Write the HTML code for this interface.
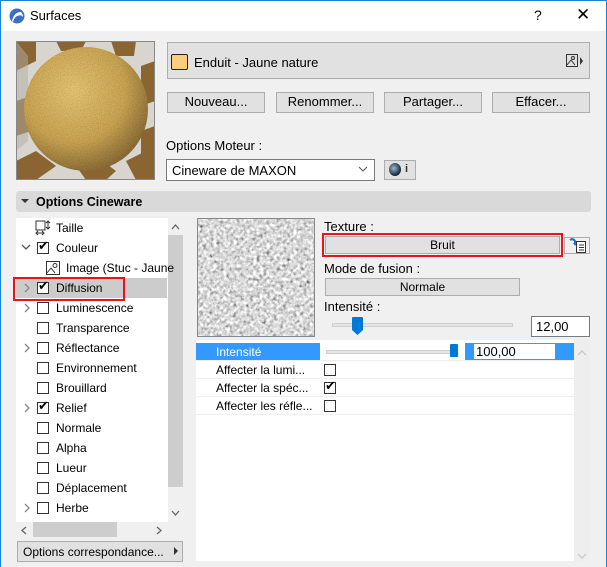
<!DOCTYPE html>
<html><head><meta charset="utf-8"><style>
*{box-sizing:border-box;margin:0;padding:0}
body{width:607px;height:567px;overflow:hidden;background:#f0f0f0;font-family:"Liberation Sans",sans-serif;font-size:12px;color:#000;position:relative}
.a{position:absolute}
.btn{position:absolute;background:#e1e1e1;border:1px solid #adadad;text-align:center;line-height:18px}
.cb{position:absolute;width:12px;height:12px;border:1px solid #333;background:#fff}
.t{position:absolute;white-space:nowrap}
</style></head><body>
<div class="a" style="left:0;top:0;width:607px;height:31px;background:#fff"></div>
<div class="a" style="left:0;top:0;width:1px;height:567px;background:#1883d7"></div>
<div class="a" style="left:606px;top:0;width:1px;height:567px;background:#1883d7"></div>
<div class="a" style="left:0;top:0;width:607px;height:1px;background:#1883d7"></div>
<svg class="a" style="left:9px;top:8px" width="16" height="16"><circle cx="8" cy="8" r="7.5" fill="#3b6fc4"/><path d="M3 13 Q5 4 12 4 Q14 6 14 9 Q12 6 8 8 Q5 10 4 14Z" fill="#fff"/></svg>
<div class="t" style="left:30px;top:8px;font-size:13px">Surfaces</div>
<div class="t" style="left:534px;top:7px;font-size:14px">?</div>
<div class="t" style="left:576px;top:5px;font-size:17px">✕</div>

<svg class="a" style="left:16px;top:41px" width="139" height="139">
<defs><filter id="g"><feTurbulence type="fractalNoise" baseFrequency="0.9" numOctaves="2" seed="3"/><feColorMatrix type="matrix" values="0 0 0 0 0  0 0 0 0 0  0 0 0 0 0  0 0 0 -0.9 0.55"/><feComposite in2="SourceGraphic" operator="in"/></filter>
<radialGradient id="sp" cx="0.4" cy="0.35" r="0.7"><stop offset="0" stop-color="#e6c573"/><stop offset="0.6" stop-color="#caa452"/><stop offset="1" stop-color="#836633"/></radialGradient></defs>
<rect width="139" height="139" fill="#d8d5cf"/>
<path d="M0 0 H20 V20 L0 30Z M40 0 H70 L65 10 H45Z M95 0 H120 L118 15 H100Z M0 60 L15 55 V90 L0 95Z M125 25 L139 20 V60 L125 65Z M125 90 L139 85 V120 L125 120Z" fill="#8a6532"/>
<path d="M0 120 L20 110 L40 125 L20 139 H0Z M60 125 L80 115 L100 130 L90 139 H70Z M110 120 L130 110 L139 118 V139 H120Z" fill="#8a6532"/>
<path d="M0 0 L12 15 L12 100 L0 110Z" fill="#b0ada6" opacity="0.5"/>
<rect x="0.5" y="0.5" width="138" height="138" fill="none" stroke="#888"/>
<circle cx="70" cy="68" r="62" fill="url(#sp)"/>
<circle cx="70" cy="68" r="62" fill="#000" filter="url(#g)" opacity="0.35"/>
</svg>

<div class="a" style="left:167px;top:42px;width:423px;height:37px;background:#e1e1e1;border:1px solid #adadad"></div>
<div class="a" style="left:171px;top:54px;width:17px;height:16px;background:#fdcd7f;border:1px solid #222;border-radius:2px"></div>
<div class="t" style="left:194px;top:55px;font-size:13px">Enduit - Jaune nature</div>
<svg class="a" style="left:566px;top:54px" width="18" height="14"><rect x="0.5" y="0.5" width="11" height="12" fill="none" stroke="#333"/><circle cx="7" cy="4" r="1.5" fill="none" stroke="#333"/><path d="M1 11 L5 6 L9 11" fill="none" stroke="#333"/><path d="M14 3 L17 7 L14 11Z" fill="#333"/></svg>

<div class="btn" style="left:167px;top:92px;width:98px;height:21px;font-size:13px">Nouveau...</div>
<div class="btn" style="left:276px;top:92px;width:98px;height:21px;font-size:13px">Renommer...</div>
<div class="btn" style="left:384px;top:92px;width:98px;height:21px;font-size:13px">Partager...</div>
<div class="btn" style="left:492px;top:92px;width:98px;height:21px;font-size:13px">Effacer...</div>

<div class="t" style="left:166px;top:138px;font-size:13px">Options Moteur :</div>
<div class="a" style="left:166px;top:159px;width:209px;height:22px;background:#fff;border:1px solid #7a7a7a"></div>
<div class="t" style="left:172px;top:163px;font-size:13px">Cineware de MAXON</div>
<svg class="a" style="left:358px;top:166px" width="10" height="7"><path d="M1 1 L5 5 L9 1" fill="none" stroke="#555"/></svg>
<div class="a" style="left:384px;top:160px;width:32px;height:20px;background:#e1e1e1;border:1px solid #adadad"></div>
<div class="a" style="left:389px;top:163px;width:12px;height:13px;border-radius:50%;background:radial-gradient(circle at 40% 40%,#9bc,#123 70%)"></div>
<div class="t" style="left:405px;top:163px;font-weight:bold;font-size:11px;color:#333">i</div>

<div class="a" style="left:16px;top:191px;width:575px;height:21px;background:#d9d9d9;border-radius:3px"></div>
<svg class="a" style="left:21px;top:199px" width="8" height="6"><path d="M0 0 L8 0 L4 4Z" fill="#333"/></svg>
<div class="t" style="left:36px;top:195px;font-weight:bold;font-size:12.5px">Options Cineware</div>

<div class="a" style="left:16px;top:218px;width:152px;height:304px;background:#fff"></div>
<div class="a" style="left:168px;top:218px;width:15px;height:304px;background:#f0f0f0"></div>
<div class="a" style="left:168px;top:235px;width:15px;height:252px;background:#cdcdcd"></div>
<svg class="a" style="left:171px;top:224px" width="9" height="6"><path d="M1 5 L4.5 1 L8 5" fill="none" stroke="#666" stroke-width="1.3"/></svg>
<svg class="a" style="left:171px;top:510px" width="9" height="6"><path d="M1 1 L4.5 5 L8 1" fill="none" stroke="#666" stroke-width="1.3"/></svg>
<div class="a" style="left:16px;top:522px;width:167px;height:16px;background:#f0f0f0"></div>
<div class="a" style="left:33px;top:522px;width:84px;height:15px;background:#cdcdcd"></div>
<svg class="a" style="left:21px;top:526px" width="6" height="9"><path d="M5 1 L1 4.5 L5 8" fill="none" stroke="#666" stroke-width="1.3"/></svg>
<svg class="a" style="left:156px;top:526px" width="6" height="9"><path d="M1 1 L5 4.5 L1 8" fill="none" stroke="#666" stroke-width="1.3"/></svg>
<div class="a" style="left:16px;top:278px;width:151px;height:20px;background:#cccccc"></div>
<div class="a" style="left:13px;top:277px;width:112px;height:24px;border:2px solid #e8141c"></div>

<svg class="a" style="left:35px;top:220px" width="16" height="16"><rect x="1" y="1" width="9" height="9" fill="none" stroke="#333"/><path d="M13 1 V9 M11 3 L13 1 L15 3 M11 7 L13 9 L15 7 M1 13 H9 M3 11 L1 13 L3 15 M7 11 L9 13 L7 15" fill="none" stroke="#333"/></svg>
<div class="t" style="left:56px;top:221px">Taille</div>
<svg class="a" style="left:21px;top:244px" width="10" height="7"><path d="M1 1 L5 5 L9 1" fill="none" stroke="#555" stroke-width="1.3"/></svg>
<div class="cb" style="left:37px;top:242px"></div><div class="t" style="left:38px;top:238px;font-size:13px">✔</div>
<div class="t" style="left:56px;top:241px">Couleur</div>
<svg class="a" style="left:46px;top:261px" width="15" height="14"><rect x="0.5" y="0.5" width="13" height="13" fill="#fff" stroke="#333"/><circle cx="9" cy="4.5" r="2" fill="none" stroke="#333"/><path d="M1 12 L5 7 L9 12" fill="none" stroke="#333"/></svg>
<div class="t" style="left:66px;top:261px">Image (Stuc - Jaune</div>
<svg class="a" style="left:24px;top:283px" width="7" height="10"><path d="M1 1 L5 5 L1 9" fill="none" stroke="#888" stroke-width="1.3"/></svg>
<div class="cb" style="left:37px;top:282px"></div><div class="t" style="left:38px;top:278px;font-size:13px">✔</div>
<div class="t" style="left:56px;top:281px">Diffusion</div>
<svg class="a" style="left:24px;top:303px" width="7" height="10"><path d="M1 1 L5 5 L1 9" fill="none" stroke="#888" stroke-width="1.3"/></svg>
<div class="cb" style="left:37px;top:302px"></div><div class="t" style="left:56px;top:301px">Luminescence</div>
<div class="cb" style="left:37px;top:322px"></div><div class="t" style="left:56px;top:321px">Transparence</div>
<svg class="a" style="left:24px;top:343px" width="7" height="10"><path d="M1 1 L5 5 L1 9" fill="none" stroke="#888" stroke-width="1.3"/></svg>
<div class="cb" style="left:37px;top:342px"></div><div class="t" style="left:56px;top:341px">Réflectance</div>
<div class="cb" style="left:37px;top:362px"></div><div class="t" style="left:56px;top:361px">Environnement</div>
<div class="cb" style="left:37px;top:382px"></div><div class="t" style="left:56px;top:381px">Brouillard</div>
<svg class="a" style="left:24px;top:403px" width="7" height="10"><path d="M1 1 L5 5 L1 9" fill="none" stroke="#888" stroke-width="1.3"/></svg>
<div class="cb" style="left:37px;top:402px"></div><div class="t" style="left:38px;top:398px;font-size:13px">✔</div>
<div class="t" style="left:56px;top:401px">Relief</div>
<div class="cb" style="left:37px;top:422px"></div><div class="t" style="left:56px;top:421px">Normale</div>
<div class="cb" style="left:37px;top:442px"></div><div class="t" style="left:56px;top:441px">Alpha</div>
<div class="cb" style="left:37px;top:462px"></div><div class="t" style="left:56px;top:461px">Lueur</div>
<div class="cb" style="left:37px;top:482px"></div><div class="t" style="left:56px;top:481px">Déplacement</div>
<svg class="a" style="left:24px;top:503px" width="7" height="10"><path d="M1 1 L5 5 L1 9" fill="none" stroke="#888" stroke-width="1.3"/></svg>
<div class="cb" style="left:37px;top:502px"></div><div class="t" style="left:56px;top:501px">Herbe</div>

<div class="a" style="left:17px;top:541px;width:166px;height:21px;background:#e1e1e1;border:1px solid #adadad"></div>
<div class="t" style="left:23px;top:545px">Options correspondance...</div>
<svg class="a" style="left:174px;top:547px" width="5" height="8"><path d="M0 0 L4 4 L0 8Z" fill="#333"/></svg>

<div class="a" style="left:196px;top:218px;width:378px;height:343px;background:#fff"></div>
<div class="a" style="left:574px;top:340px;width:16px;height:221px;background:#eee"></div>
<svg class="a" style="left:577px;top:350px" width="10" height="6"><path d="M1 5 L5 1 L9 5" fill="none" stroke="#ccc" stroke-width="1.5"/></svg>
<svg class="a" style="left:577px;top:553px" width="10" height="6"><path d="M1 1 L5 5 L9 1" fill="none" stroke="#ccc" stroke-width="1.5"/></svg>
<div class="a" style="left:196px;top:218px;width:124px;height:122px;background:#f0f0f0"></div>
<svg class="a" style="left:197px;top:218px" width="118" height="119">
<filter id="n"><feTurbulence type="fractalNoise" baseFrequency="0.3" numOctaves="2" seed="7"/><feColorMatrix type="matrix" values="0.33 0.33 0.33 0 0  0.33 0.33 0.33 0 0  0.33 0.33 0.33 0 0  0 0 0 0 1"/><feComponentTransfer><feFuncR type="linear" slope="2.4" intercept="-0.5"/><feFuncG type="linear" slope="2.4" intercept="-0.5"/><feFuncB type="linear" slope="2.4" intercept="-0.5"/></feComponentTransfer></filter>
<rect width="118" height="119" filter="url(#n)"/>
<rect x="0.5" y="0.5" width="117" height="118" fill="none" stroke="#888"/>
</svg>
<div class="a" style="left:320px;top:218px;width:254px;height:122px;background:#f0f0f0"></div>
<div class="a" style="left:574px;top:218px;width:17px;height:122px;background:#f0f0f0"></div>

<div class="t" style="left:324px;top:219px;font-size:13px">Texture :</div>
<div class="a" style="left:322px;top:233px;width:241px;height:24px;border:2px solid #e8141c"></div>
<div class="btn" style="left:325px;top:236px;width:235px;height:18px;line-height:16px">Bruit</div>
<div class="a" style="left:564px;top:237px;width:26px;height:17px;border:1px solid #adadad;background:#f0f0f0"></div>
<svg class="a" style="left:568px;top:237px" width="20" height="17"><path d="M2 3 Q5 1 7 4 L7 7" fill="none" stroke="#1e6fd0" stroke-width="2"/><path d="M5 6 L7 9 L9 6Z" fill="#1e6fd0"/><rect x="8.5" y="4.5" width="9" height="11" fill="#fff" stroke="#333"/><path d="M11 8 H16 M11 10.5 H16 M11 13 H16" stroke="#333"/></svg>
<div class="t" style="left:324px;top:261px;font-size:13px">Mode de fusion :</div>
<div class="btn" style="left:325px;top:278px;width:195px;height:18px;line-height:16px">Normale</div>
<div class="t" style="left:324px;top:299px;font-size:13px">Intensité :</div>
<div class="a" style="left:332px;top:323px;width:181px;height:4px;background:#e6e6e6;border:1px solid #d0d0d0"></div>
<svg class="a" style="left:352px;top:317px" width="11" height="18"><path d="M0 1 Q0 0 1 0 H10 Q11 0 11 1 V13 L5.5 18 L0 13Z" fill="#0078d7"/></svg>
<div class="a" style="left:531px;top:316px;width:59px;height:21px;background:#fff;border:1px solid #7a7a7a"></div>
<div class="t" style="left:536px;top:319px;font-size:13px">12,00</div>

<div class="a" style="left:196px;top:343px;width:124px;height:17px;background:#3399ff"></div>
<div class="t" style="left:216px;top:345px;color:#fff">Intensité</div>
<div class="a" style="left:326px;top:350px;width:128px;height:4px;background:#e6e6e6;border:1px solid #d0d0d0"></div>
<div class="a" style="left:450px;top:344px;width:8px;height:13px;background:#0078d7;border-radius:1px"></div>
<div class="a" style="left:465px;top:343px;width:109px;height:17px;background:#3399ff"></div>
<div class="a" style="left:474px;top:344px;width:81px;height:15px;background:#fff"></div>
<div class="t" style="left:476px;top:344px;font-size:13px">100,00</div>
<div class="a" style="left:196px;top:360px;width:378px;height:1px;background:#eee"></div>
<div class="a" style="left:196px;top:378px;width:378px;height:1px;background:#eee"></div>
<div class="a" style="left:196px;top:396px;width:378px;height:1px;background:#eee"></div>
<div class="a" style="left:196px;top:414px;width:378px;height:1px;background:#eee"></div>
<div class="t" style="left:216px;top:363px">Affecter la lumi...</div>
<div class="t" style="left:216px;top:381px">Affecter la spéc...</div>
<div class="t" style="left:216px;top:399px">Affecter les réfle...</div>
<div class="cb" style="left:324px;top:364px"></div>
<div class="cb" style="left:324px;top:382px"></div><div class="t" style="left:325px;top:378px;font-size:13px">✔</div>
<div class="cb" style="left:324px;top:400px"></div>
</body></html>
